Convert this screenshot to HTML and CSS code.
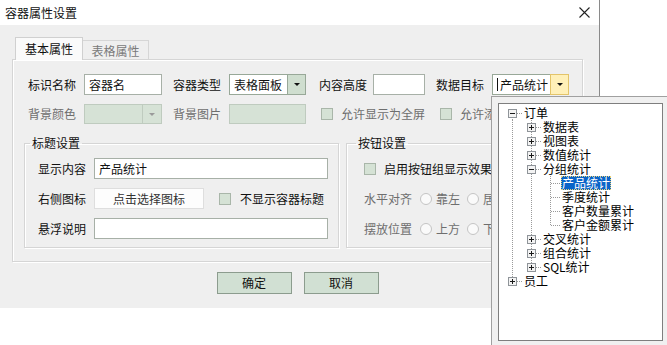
FILE: index.html
```html
<!DOCTYPE html>
<html lang="zh-CN">
<head>
<meta charset="utf-8">
<title>容器属性设置</title>
<link rel="stylesheet" href="styles.css">
</head>
<body>
<div class="screen">
  <div class="dialog">
    <div class="titlebar">
      <span class="title">容器属性设置</span>
      <svg class="close" width="11" height="11" viewBox="0 0 11 11"><path d="M0.5 0.5L10.5 10.5M10.5 0.5L0.5 10.5" stroke="#222" stroke-width="1.1" fill="none"/></svg>
    </div>
    <div class="body">
      <div class="tabs">
        <div class="tab active">基本属性</div>
        <div class="tab">表格属性</div>
      </div>
      <div class="panel">
        <div class="form">
          <span class="lbl">标识名称</span>
          <div class="field">容器名</div>
          <span class="lbl pad11">容器类型</span>
          <div class="combo"><span class="ctext">表格面板</span><span class="cbtn"><i class="arrow"></i></span></div>
          <span class="lbl pad13">内容高度</span>
          <div class="field"></div>
          <span class="lbl pad11">数据目标</span>
          <div class="combo"><span class="ctext"><i class="caret"></i>产品统计</span><span class="cbtn hot"><i class="arrow"></i></span></div>

          <span class="lbl dim">背景颜色</span>
          <div class="combo disabled"><span class="ctext"></span><span class="cbtn"><i class="arrow grey"></i></span></div>
          <span class="lbl pad11 dim">背景图片</span>
          <div class="field disabled"></div>
          <label class="check span2"><span class="chk"></span><span class="dim">允许显示为全屏</span></label>
          <label class="check span2"><span class="chk"></span><span class="dim">允许添加</span></label>
        </div>
        <div class="groups">
          <fieldset class="group g1">
            <legend>标题设置</legend>
            <div class="grows">
              <div class="grow"><span class="glbl">显示内容</span><div class="field wide">产品统计</div></div>
              <div class="grow"><span class="glbl">右侧图标</span><div class="pickbtn">点击选择图标</div><label class="check gchk"><span class="chk"></span><span>不显示容器标题</span></label></div>
              <div class="grow"><span class="glbl">悬浮说明</span><div class="field wide"></div></div>
            </div>
          </fieldset>
          <fieldset class="group g2">
            <legend>按钮设置</legend>
            <div class="grows">
              <div class="grow"><label class="check"><span class="chk"></span><span>启用按钮组显示效果</span></label></div>
              <div class="grow"><span class="glbl dim">水平对齐</span><span class="radio"></span><span class="rtext dim">靠左</span><span class="radio"></span><span class="rtext dim">居中</span></div>
              <div class="grow"><span class="glbl dim">摆放位置</span><span class="radio"></span><span class="rtext dim">上方</span><span class="radio"></span><span class="rtext dim">下方</span></div>
            </div>
          </fieldset>
        </div>
      </div>
      <div class="actions">
        <button class="btn">确定</button>
        <button class="btn">取消</button>
      </div>
    </div>
  </div>

  <div class="popup">
    <div class="tree">
      <div class="row"><span class="c rfirst"><svg width="9" height="9"><rect x=".5" y=".5" width="8" height="8" fill="#f3f3f3" stroke="#8f9499"/><path d="M2 4.5h5" stroke="#1a1a1a"/></svg></span><span class="t">订单</span></div>
      <div class="row"><span class="c pipe"></span><span class="c tee"><svg width="9" height="9"><rect x=".5" y=".5" width="8" height="8" fill="#f3f3f3" stroke="#8f9499"/><path d="M2 4.5h5M4.5 2v5" stroke="#1a1a1a"/></svg></span><span class="t">数据表</span></div>
      <div class="row"><span class="c pipe"></span><span class="c tee"><svg width="9" height="9"><rect x=".5" y=".5" width="8" height="8" fill="#f3f3f3" stroke="#8f9499"/><path d="M2 4.5h5M4.5 2v5" stroke="#1a1a1a"/></svg></span><span class="t">视图表</span></div>
      <div class="row"><span class="c pipe"></span><span class="c tee"><svg width="9" height="9"><rect x=".5" y=".5" width="8" height="8" fill="#f3f3f3" stroke="#8f9499"/><path d="M2 4.5h5M4.5 2v5" stroke="#1a1a1a"/></svg></span><span class="t">数值统计</span></div>
      <div class="row"><span class="c pipe"></span><span class="c tee"><svg width="9" height="9"><rect x=".5" y=".5" width="8" height="8" fill="#f3f3f3" stroke="#8f9499"/><path d="M2 4.5h5" stroke="#1a1a1a"/></svg></span><span class="t">分组统计</span></div>
      <div class="row"><span class="c pipe"></span><span class="c pipe"></span><span class="c tee"></span><span class="t sel">产品统计</span></div>
      <div class="row"><span class="c pipe"></span><span class="c pipe"></span><span class="c tee"></span><span class="t">季度统计</span></div>
      <div class="row"><span class="c pipe"></span><span class="c pipe"></span><span class="c tee"></span><span class="t">客户数量累计</span></div>
      <div class="row"><span class="c pipe"></span><span class="c pipe"></span><span class="c ell"></span><span class="t">客户金额累计</span></div>
      <div class="row"><span class="c pipe"></span><span class="c tee"><svg width="9" height="9"><rect x=".5" y=".5" width="8" height="8" fill="#f3f3f3" stroke="#8f9499"/><path d="M2 4.5h5M4.5 2v5" stroke="#1a1a1a"/></svg></span><span class="t">交叉统计</span></div>
      <div class="row"><span class="c pipe"></span><span class="c tee"><svg width="9" height="9"><rect x=".5" y=".5" width="8" height="8" fill="#f3f3f3" stroke="#8f9499"/><path d="M2 4.5h5M4.5 2v5" stroke="#1a1a1a"/></svg></span><span class="t">组合统计</span></div>
      <div class="row"><span class="c pipe"></span><span class="c ell"><svg width="9" height="9"><rect x=".5" y=".5" width="8" height="8" fill="#f3f3f3" stroke="#8f9499"/><path d="M2 4.5h5M4.5 2v5" stroke="#1a1a1a"/></svg></span><span class="t">SQL统计</span></div>
      <div class="row"><span class="c ell"><svg width="9" height="9"><rect x=".5" y=".5" width="8" height="8" fill="#f3f3f3" stroke="#8f9499"/><path d="M2 4.5h5M4.5 2v5" stroke="#1a1a1a"/></svg></span><span class="t">员工</span></div>
    </div>
  </div>
</div>
</body>
</html>
```
FILE: styles.css
```css
* { box-sizing: border-box; }
html, body { margin: 0; background: #fff; }
body {
  font-family: "Noto Sans CJK SC", "Microsoft YaHei", sans-serif;
  font-size: 12px;
  line-height: 14px;
  color: #111;
}
.screen { position: relative; width: 667px; height: 345px; overflow: hidden; }

.dialog { width: 600px; border-right: 1px solid #8a8a8a; }
.titlebar {
  height: 25px; background: #fff;
  display: flex; align-items: center;
  padding: 0 9px 0 5px;
}
.title { color: #111; }
.close { margin-left: auto; }

.body { background: #efefef; height: 283px; padding: 12px 0 0 12px; }

.tabs { display: flex; align-items: flex-end; height: 22px; margin-left: 3px; }
.tab {
  display: flex; align-items: center; justify-content: center;
  border: 1px solid #d6d6d6; border-bottom: none;
}
.tab.active {
  width: 68px; height: 23px; margin-bottom: -1px;
  background: #fafafa; position: relative; z-index: 1;
  border-color: #d0d0d0;
}
.tab:not(.active) {
  width: 66px; height: 19px; border-left: none;
  background: #efefef; color: #7a7a7a; padding-top: 1px;
}

.panel {
  width: 571px; height: 203px;
  border: 1px solid #d5d5d5;
  box-shadow: 1px 1px 0 #fff, inset 1px 1px 0 #fff;
  padding: 14px 0 0 15px;
}

.form {
  display: grid;
  grid-template-columns: 56px 78px 67px 77px 67px 52px 67px 77px;
  grid-template-rows: 21px 20px;
  row-gap: 9px;
  align-items: center;
}
.lbl { white-space: nowrap; }
.pad11 { padding-left: 11px; }
.pad13 { padding-left: 13px; }
.dim { color: #6e6e6e; }

.field {
  height: 100%; background: #fff;
  border: 1px solid #a7b0a7;
  padding: 0 4px; display: flex; align-items: center;
}
.field.disabled, .combo.disabled { background: #d6e2d6; border-color: #bfcbbf; }
.combo {
  height: 100%; display: flex;
  border: 1px solid #98a898; background: #fff;
}
.ctext { flex: 1; display: flex; align-items: center; padding-left: 4px; }
.cbtn {
  width: 18px; display: flex; align-items: center; justify-content: center;
  background: #cfdecf; border-left: 1px solid #98a898;
}
.combo.disabled .ctext { background: #d6e2d6; }
.combo.disabled .cbtn { background: #d6e2d6; border-left-color: #bfcbbf; width: 19px; }
.cbtn.hot { background: #fff0b8; border: 1px solid #e3c46a; margin: -1px -1px -1px 0; width: 19px; }
.arrow {
  width: 0; height: 0;
  border-left: 3px solid transparent; border-right: 3px solid transparent;
  border-top: 3px solid #111;
}
.arrow.grey { border-top-color: #9a9a9a; }
.caret { display: inline-block; width: 1px; height: 13px; background: #111; margin-right: 2px; }

.check { display: flex; align-items: center; gap: 8px; white-space: nowrap; }
.span2 { grid-column: span 2; padding-left: 15px; }
.chk {
  width: 12px; height: 12px; flex: none;
  background: #d5e2d5; border: 1px solid #a9b6a9;
}

.groups { display: flex; gap: 7px; margin: 11px 0 0 -4px; }
.group {
  margin: 0; min-width: 0;
  border: 1px solid #d5d5d5;
  box-shadow: 1px 1px 0 #fff, inset 1px 1px 0 #fff;
  padding: 7px 10px 8px 13px;
}
.group legend { padding: 0 2px; margin-left: -8px; line-height: 16px; }
.g1 { width: 315px; }
.g2 { width: 225px; padding-left: 17px; }
.grows { display: flex; flex-direction: column; gap: 9px; }
.grow { display: flex; align-items: center; height: 21px; white-space: nowrap; }
.glbl { width: 56px; flex: none; }
.field.wide { width: 234px; }
.pickbtn {
  width: 110px; height: 21px; background: #fdfdfd;
  border: 1px solid #dedede; color: #333;
  display: flex; align-items: center; justify-content: center;
}
.gchk { margin-left: 15px; gap: 9px; }
.radio {
  width: 12px; height: 12px; border-radius: 50%; flex: none;
  border: 1px solid #c4c4c4; background: #fafafa;
}
.rtext { margin: 0 7px 0 4px; }

.actions { width: 571px; display: flex; justify-content: center; gap: 12px; margin-top: 10px; }
.btn {
  width: 75px; height: 22px; padding: 0;
  font: inherit; color: #111;
  background: #d1e0d3; border: 1px solid #8c9c8e;
}

.popup {
  position: absolute; left: 491px; top: 96px;
  width: 176px; height: 249px;
  background: #f0f0f0;
  border-top: 1px solid #a0a0a0; border-left: 1px solid #a0a0a0;
  padding: 6px 0 0 6px;
}
.tree {
  width: 165px; height: 238px; background: #fff;
  border: 1px solid #7e7e7e;
  padding: 2px 0 0 4px;
}
.row { display: flex; height: 14px; }
.c { width: 19px; height: 14px; flex: none; }
.c svg { display: block; margin: 3px 0 0 5px; }
.pipe {
  background: repeating-linear-gradient(to bottom, #9a9a9a 0 1px, transparent 1px 2px) 9px 0 / 1px 14px no-repeat;
}
.tee {
  background:
    repeating-linear-gradient(to bottom, #9a9a9a 0 1px, transparent 1px 2px) 9px 0 / 1px 14px no-repeat,
    repeating-linear-gradient(to right, transparent 0 1px, #9a9a9a 1px 2px) 9px 7px / 10px 1px no-repeat;
}
.ell {
  background:
    repeating-linear-gradient(to bottom, #9a9a9a 0 1px, transparent 1px 2px) 9px 0 / 1px 7px no-repeat,
    repeating-linear-gradient(to right, transparent 0 1px, #9a9a9a 1px 2px) 9px 7px / 10px 1px no-repeat;
}
.rfirst {
  background:
    repeating-linear-gradient(to bottom, #9a9a9a 0 1px, transparent 1px 2px) 9px 7px / 1px 7px no-repeat,
    repeating-linear-gradient(to right, transparent 0 1px, #9a9a9a 1px 2px) 9px 7px / 10px 1px no-repeat;
}
.t { margin-left: 1px; padding: 0 1px; line-height: 14px; white-space: nowrap; color: #000; }
.t.sel { background: #0a64c8; color: #fff; outline: 1px dotted #e8d27a; outline-offset: -1px; }
```
